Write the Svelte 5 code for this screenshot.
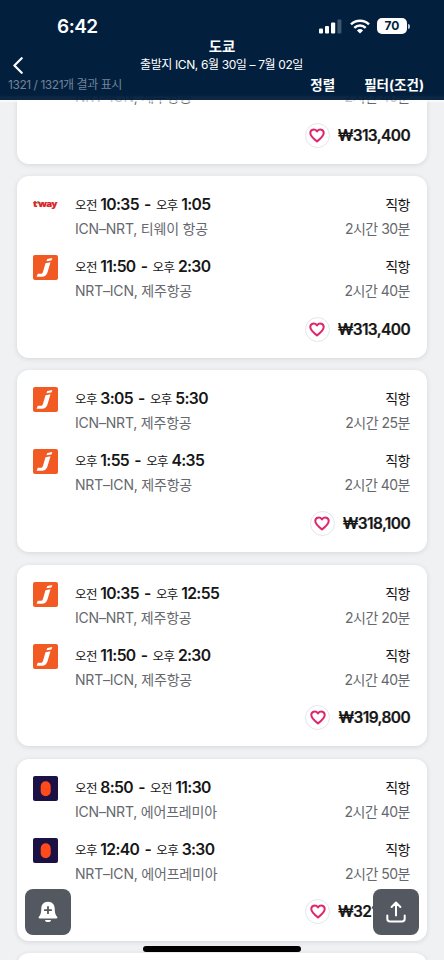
<script lang="ts">
  type Airline = 'tway' | 'jeju' | 'premia';

  interface Leg {
    airline: Airline;
    from: [string, string];
    to: [string, string];
    route: string;
    duration: string;
  }

  interface Trip {
    price: string;
    legs: Leg[];
  }

  const names: Record<Airline, string> = {
    tway: '티웨이 항공',
    jeju: '제주항공',
    premia: '에어프레미아',
  };

  function leg(airline: Airline, route: string, from: [string, string], to: [string, string], duration: string): Leg {
    return { airline, route, from, to, duration };
  }

  // fully visible results; the one scrolled under the header is in the markup
  const trips: Trip[] = [
    {
      price: '313,400',
      legs: [
        leg('tway', 'ICN–NRT', ['오전', '10:35'], ['오후', '1:05'], '2시간 30분'),
        leg('jeju', 'NRT–ICN', ['오전', '11:50'], ['오후', '2:30'], '2시간 40분'),
      ],
    },
    {
      price: '318,100',
      legs: [
        leg('jeju', 'ICN–NRT', ['오후', '3:05'], ['오후', '5:30'], '2시간 25분'),
        leg('jeju', 'NRT–ICN', ['오후', '1:55'], ['오후', '4:35'], '2시간 40분'),
      ],
    },
    {
      price: '319,800',
      legs: [
        leg('jeju', 'ICN–NRT', ['오전', '10:35'], ['오후', '12:55'], '2시간 20분'),
        leg('jeju', 'NRT–ICN', ['오전', '11:50'], ['오후', '2:30'], '2시간 40분'),
      ],
    },
    {
      price: '321,900',
      legs: [
        leg('premia', 'ICN–NRT', ['오전', '8:50'], ['오전', '11:30'], '2시간 40분'),
        leg('premia', 'NRT–ICN', ['오후', '12:40'], ['오후', '3:30'], '2시간 50분'),
      ],
    },
  ];
</script>

{#snippet price(amount: string)}
  <div class="price">
    <button class="save" aria-label="저장">
      <svg viewBox="0 0 16 15" width="16" height="15">
        <path d="M8 13.4C5.2 11.3 1.3 8.4 1.3 5.1 1.3 1.5 5.6.2 8 3.4 10.4.2 14.7 1.5 14.7 5.1c0 3.3-3.9 6.2-6.7 8.3z" fill="none" stroke="#e0256d" stroke-width="2" stroke-linejoin="round" />
      </svg>
    </button>
    <strong>₩{amount}</strong>
  </div>
{/snippet}

<div class="screen">
  <main class="results">
    <article class="card scrolled">
      <div class="leg">
        <div class="info muted">NRT–ICN, 제주항공</div>
        <div class="muted duration">2시간 40분</div>
      </div>
      {@render price('313,400')}
    </article>
    {#each trips as trip}
      <article class="card">
        {#each trip.legs as item}
          <div class="leg">
            <div class="logo">
              {#if item.airline === 'tway'}
                <span class="tway">t<i>’</i>way</span>
              {:else if item.airline === 'jeju'}
                <svg viewBox="0 0 25 25" width="25" height="25">
                  <rect width="25" height="25" rx="2" fill="#f15a22" />
                  <path d="M14.3 3.9 19.4 3l-1 2.4-5 .9zM12.5 8.2l5-1-2.9 9.7c-1.1 3.6-3 4.8-6.2 4.8H3.6l1.2-2.9h2.6c1.5 0 2.1-.5 2.6-2.1z" fill="#fff" />
                </svg>
              {:else}
                <svg viewBox="0 0 25 25" width="25" height="25">
                  <rect width="25" height="25" rx="2" fill="#1b1145" />
                  <rect x="7.7" y="5.2" width="10" height="15" rx="5" fill="#ff4a1c" />
                </svg>
              {/if}
            </div>
            <div class="info">
              <div class="times">
                <span>{item.from[0]}</span>
                <b>{item.from[1]}</b>
                <b class="dash">-</b>
                <span>{item.to[0]}</span>
                <b>{item.to[1]}</b>
              </div>
              <div class="muted">{item.route}, {names[item.airline]}</div>
            </div>
            <div class="stops">
              <div class="direct">직항</div>
              <div class="muted duration">{item.duration}</div>
            </div>
          </div>
        {/each}
        {@render price(trip.price)}
      </article>
    {/each}
    <article class="card"></article>
  </main>

  <header>
    <div class="status">
      <span class="clock">6:42</span>
      <div class="signals">
        <svg viewBox="0 0 23 15" width="23" height="15" fill="#fff">
          <rect x="0" y="9.5" width="4" height="5" rx="1" />
          <rect x="6" y="7" width="4" height="7.5" rx="1" />
          <rect x="12" y="3.5" width="4.2" height="11" rx="1" />
          <rect x="18.4" y="0.5" width="4" height="14" rx="1" opacity=".25" />
        </svg>
        <svg class="wifi" viewBox="0 0 20 15" width="20" height="15" fill="none" stroke="#fff" stroke-width="2.5">
          <path d="M1 5.3a12.9 12.9 0 0 1 18 0M4.3 8.8a8.1 8.1 0 0 1 11.4 0" />
          <path d="M10 14.6 6.9 11.5a4.5 4.5 0 0 1 6.2 0z" fill="#fff" stroke="none" />
        </svg>
        <span class="battery">70</span>
        <span class="tip"></span>
      </div>
    </div>
    <h1>도쿄</h1>
    <div class="nav">
      <svg viewBox="0 0 10 17" width="10" height="17" fill="none" stroke="#fff" stroke-width="2.2" stroke-linecap="round" stroke-linejoin="round">
        <path d="M8.7 1.2 1.4 8.5l7.3 7.3" />
      </svg>
      <p>출발지 ICN, 6월 30일 – 7월 02일</p>
    </div>
    <div class="tools">
      <span class="count">1321 / 1321개 결과 표시</span>
      <b class="sort">정렬</b>
      <b class="filter">필터(조건)</b>
    </div>
  </header>

  <button class="fab alert" aria-label="알림">
    <svg viewBox="0 0 20 22" width="20" height="22">
      <path d="M10 .8c4.2 0 6.6 2.8 6.7 6.7.1 4.2.6 6.1 2.4 8.3.6.8.2 1.7-.8 1.7H1.7c-1 0-1.4-.9-.8-1.7 1.8-2.2 2.3-4.1 2.4-8.3C3.4 3.6 5.8.8 10 .8zM7 18.9h6c-.1 1.4-1 2.1-3 2.1s-2.9-.7-3-2.1z" fill="#fff" />
      <path d="M10 5.3v7.8M6.1 9.2h7.8" stroke="#545860" stroke-width="1.8" />
    </svg>
  </button>
  <button class="fab share" aria-label="공유">
    <svg viewBox="0 0 20 22" width="20" height="22" fill="none" stroke="#fff" stroke-width="2" stroke-linecap="round" stroke-linejoin="round">
      <path d="M10 14.5V1.7M5.6 6 10 1.5 14.4 6M1.3 14.5v3.3a2.8 2.8 0 0 0 2.8 2.8h11.8a2.8 2.8 0 0 0 2.8-2.8v-3.3" />
    </svg>
  </button>
  <div class="home"></div>
</div>

<style>
  :global(body) {
    margin: 0;
  }

  .screen {
    position: relative;
    width: 444px;
    height: 960px;
    overflow: hidden;
    background: #eff1f3;
    color: #161616;
    font-family: Inter, 'Noto Sans CJK KR', sans-serif;
  }

  button {
    padding: 0;
    border: 0;
  }

  .results {
    box-sizing: border-box;
    display: flex;
    flex-direction: column;
    gap: 12.5px;
    height: 960px;
    padding: 85.3px 17px 0;
    overflow: hidden;
  }

  .card {
    box-sizing: border-box;
    flex: none;
    height: 181.7px;
    padding: 16px 17px 0 16px;
    background: #fff;
    border-radius: 12px;
    box-shadow: 0 1px 5px rgba(30, 40, 60, 0.12);
  }

  .card.scrolled {
    height: 78.5px;
    padding-top: 0;
    border-radius: 0 0 12px 12px;
  }

  .leg {
    display: flex;
    height: 62px;
  }

  .scrolled .leg {
    height: 37px;
    padding-left: 42px;
  }

  .logo {
    width: 42px;
    padding-top: 1px;
  }

  .logo svg {
    display: block;
  }

  .tway {
    display: block;
    padding-top: 4px;
    color: #da2128;
    font: 800 9.5px/14px 'Open Sans', sans-serif;
    letter-spacing: -0.7px;
    -webkit-text-stroke: 0.2px;
  }

  .tway i {
    color: #58a846;
    font-style: normal;
  }

  .info {
    flex: 1;
    white-space: nowrap;
  }

  .times,
  .direct {
    height: 25px;
    line-height: 25px;
  }

  .times {
    display: flex;
    align-items: baseline;
    gap: 3.5px;
    font-size: 12.5px;
    letter-spacing: -0.6px;
  }

  .times b {
    font-size: 15.7px;
    font-weight: 600;
    letter-spacing: -0.65px;
  }

  .times .dash {
    margin: 0 1.7px;
  }

  .direct {
    font-size: 14px;
    letter-spacing: -0.5px;
  }

  .muted {
    height: 24px;
    color: #65686d;
    font-size: 14px;
    letter-spacing: -0.2px;
    line-height: 24px;
  }

  .duration {
    letter-spacing: -0.5px;
  }

  .stops {
    text-align: right;
  }

  .price {
    display: flex;
    align-items: center;
    justify-content: flex-end;
    gap: 8px;
    height: 26px;
  }

  .price strong {
    font-size: 15.5px;
    font-weight: 600;
    letter-spacing: -0.62px;
    -webkit-text-stroke: 0.2px;
  }

  .save {
    display: grid;
    place-items: center;
    width: 25px;
    height: 25px;
    background: #fff;
    border: 1px solid #e4e6ea;
    border-radius: 50%;
  }

  header {
    position: absolute;
    inset: 0 0 auto;
    height: 100px;
    color: #fff;
    background: linear-gradient(#021f3d 95px, rgba(2, 31, 61, 0.96) 97px);
    box-shadow: 0 2px 1px rgba(255, 255, 255, 0.6);
  }

  .status {
    display: flex;
    justify-content: space-between;
    height: 38px;
    padding: 0 34px 0 57px;
  }

  .clock {
    padding-top: 15px;
    font-size: 19px;
    font-weight: 600;
    letter-spacing: -0.5px;
    line-height: 24px;
  }

  .signals {
    display: flex;
    align-items: center;
    padding-top: 14px;
  }

  .wifi {
    margin: 0 7.5px;
  }

  .battery {
    width: 30px;
    height: 16px;
    color: #021f3d;
    background: #fff;
    border-radius: 5px;
    font-size: 12px;
    font-weight: 700;
    line-height: 16px;
    text-align: center;
  }

  .tip {
    width: 2px;
    height: 5px;
    margin-left: 1px;
    background: #c0c8d2;
    border-radius: 0 2px 2px 0;
  }

  h1 {
    margin: 0;
    font-size: 14.5px;
    font-weight: 700;
    line-height: 18px;
    text-align: center;
  }

  .nav {
    display: flex;
    align-items: center;
    height: 18px;
    padding: 0 13px;
  }

  .nav p {
    flex: 1;
    margin: 0 11px 0 0;
    font-size: 12px;
    letter-spacing: -0.38px;
    line-height: 18px;
    text-align: center;
  }

  .tools {
    display: flex;
    align-items: center;
    height: 22px;
    padding: 0 20px 0 8px;
    font-size: 13.5px;
    line-height: 18px;
  }

  .count {
    flex: 1;
    color: #71839a;
    font-size: 12px;
    letter-spacing: -0.45px;
  }

  .filter {
    margin-left: 29px;
  }

  .fab {
    position: absolute;
    top: 889px;
    display: grid;
    place-items: center;
    width: 46px;
    height: 46px;
    background: #545860;
    border-radius: 8px;
  }

  .alert {
    left: 25px;
  }

  .share {
    left: 373px;
  }

  .home {
    position: absolute;
    top: 946px;
    left: 143px;
    width: 158px;
    height: 6px;
    background: #000;
    border-radius: 3px;
  }
</style>
